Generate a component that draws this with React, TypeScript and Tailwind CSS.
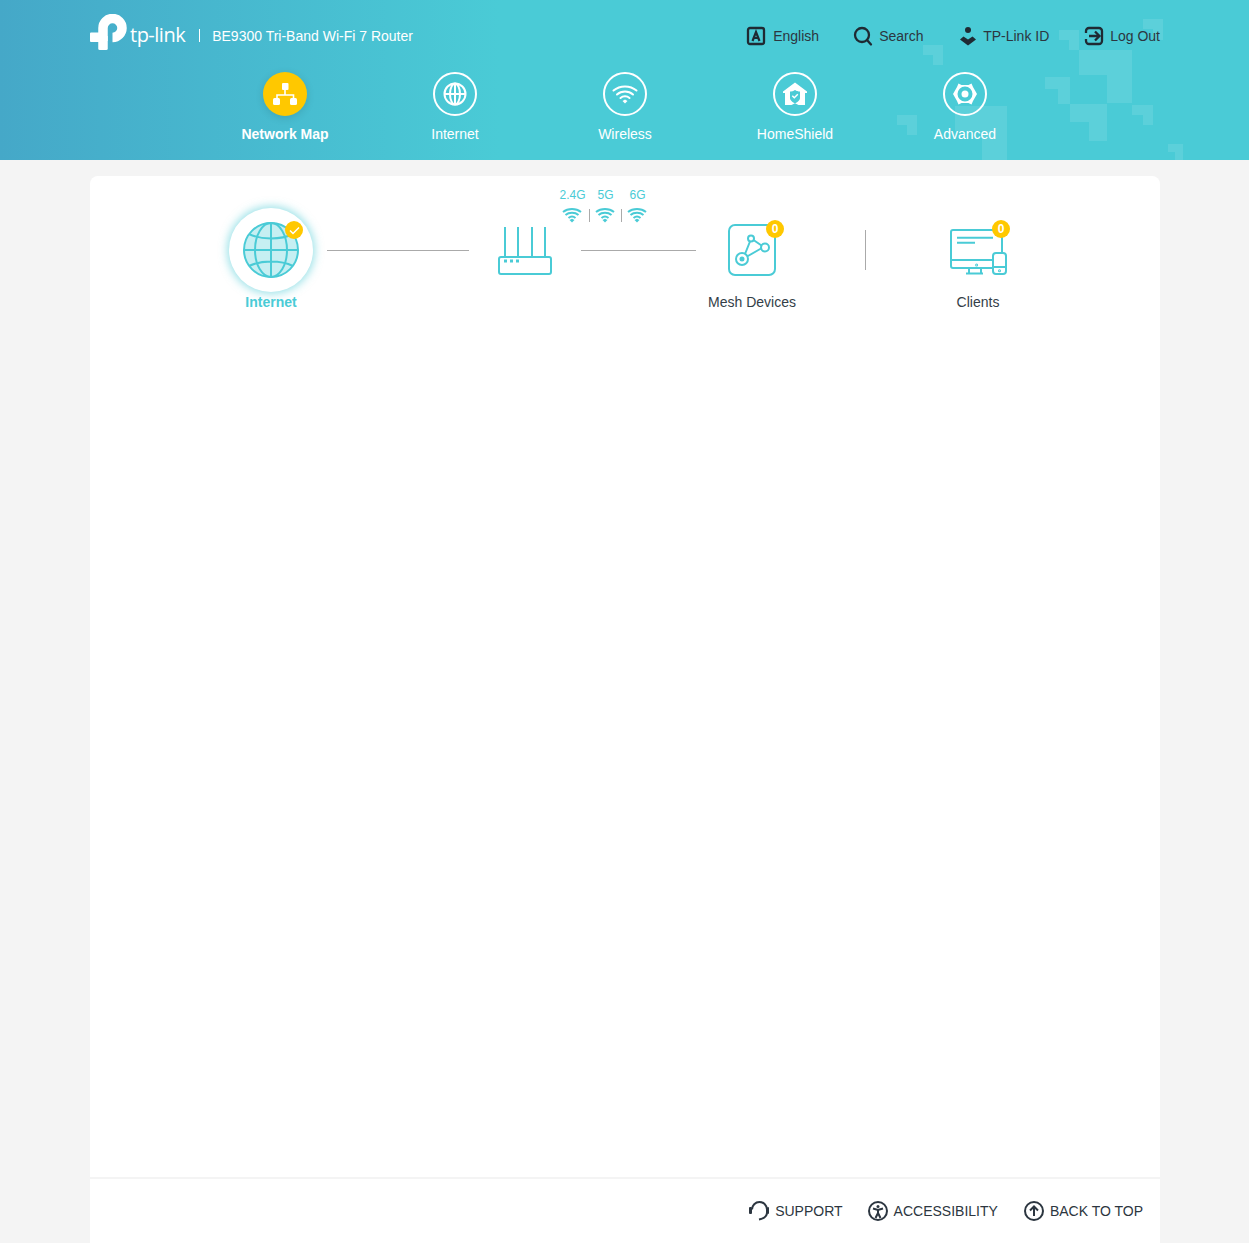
import React from "react";

const CORNERS: [number, number, number, number, number][] = [
  [923, 45, 20, 20, 10],
  [1143, 19, 20, 21, 10],
  [1059, 30, 20, 20, 10],
  [1079, 50, 53, 53, 25],
  [1045, 77, 25, 27, 12],
  [1070, 104, 37, 37, 18],
  [1132, 105, 21, 20, 10],
  [897, 115, 20, 20, 10],
  [955, 106, 52, 54, 25],
  [1168, 144, 15, 16, 8],
];

function Decoration() {
  return (
    <svg className="absolute left-0 top-0" width="1249" height="160" fill="#ffffff" fillOpacity="0.1">
      {CORNERS.map(([x, y, w, h, t], i) => (
        <path key={i} d={`M${x} ${y}h${w}v${h}h${-t}v${-(h - t)}h${-(w - t)}z`} />
      ))}
    </svg>
  );
}

function Logo() {
  return (
    <svg width="38" height="36" viewBox="0 0 38 36" fill="none">
      <path d="M13 27V14a9.500 9.500 0 1 1 9.500 9.500" stroke="#fff" strokeWidth="9.500" />
      <path d="M1 18.500h12v9.500H1a1 1 0 0 1-1-1v-7.500a1 1 0 0 1 1-1z" fill="#fff" />
      <path d="M8.250 22h9.500v12.500a1.500 1.500 0 0 1-1.500 1.500h-6.500a1.500 1.500 0 0 1-1.500-1.500z" fill="#fff" />
    </svg>
  );
}

function TopIcon({ name }: { name: string }) {
  const common = { width: 22, height: 22, viewBox: "0 0 22 22", fill: "none", stroke: "#1f2a33", strokeWidth: 2.3 } as const;
  if (name === "lang")
    return (
      <svg {...common}>
        <rect x="3" y="3" width="16" height="16" rx="2" />
        <path d="M7.500 16l3.500-9 3.500 9M8.800 13h4.400" strokeWidth="2.200" />
      </svg>
    );
  if (name === "search")
    return (
      <svg {...common}>
        <circle cx="11" cy="10" r="7" />
        <path d="M16 15l4 4.500" strokeLinecap="round" />
      </svg>
    );
  if (name === "id")
    return (
      <svg {...common} stroke="none" fill="#1f2a33">
        <circle cx="13" cy="5" r="3" />
        <path d="M5 14.500l3.500-3 4.500 3 4.500-3 3.500 3-8 6z" />
      </svg>
    );
  return (
    <svg {...common}>
      <path d="M4 8V6a3 3 0 0 1 3-3h10a3 3 0 0 1 3 3v10a3 3 0 0 1-3 3H7a3 3 0 0 1-3-3v-2" />
      <path d="M7 11h11M13 6.500l4.500 4.500-4.500 4.500" />
    </svg>
  );
}

function TopLink({ icon, label, w }: { icon: string; label: string; w: string }) {
  return (
    <div className={`flex items-center gap-[6px] ${w}`}>
      <TopIcon name={icon} />
      <span className="text-[14px] leading-5 text-[#2c3640]">{label}</span>
    </div>
  );
}

function NavIcon({ name }: { name: string }) {
  if (name === "map")
    return (
      <svg width="26" height="26" viewBox="0 0 26 26" fill="#fff">
        <rect x="10" y="2" width="6.500" height="7" rx="1" />
        <path d="M13 8v6M5 18v-4h16.500v4" fill="none" stroke="#fff" strokeWidth="1.600" />
        <rect x="1" y="17" width="7" height="7" rx="1.500" />
        <rect x="18" y="17" width="7" height="7" rx="1.500" />
      </svg>
    );
  if (name === "globe")
    return (
      <svg width="26" height="26" viewBox="0 0 26 26" fill="none" stroke="#fff" strokeWidth="2">
        <circle cx="13" cy="13" r="10.500" />
        <ellipse cx="13" cy="13" rx="5" ry="10.500" />
        <path d="M13 2.500v21M2.500 13h21" />
      </svg>
    );
  if (name === "wifi")
    return (
      <svg width="26" height="26" viewBox="0 0 26 26" fill="none" stroke="#fff" strokeWidth="2" strokeLinecap="round">
        <path d="M1.500 9.500c6.500-5.500 16.500-5.500 23 0M5 13.500c4.500-4 11.500-4 16 0M8.500 17c2.500-2.200 6.500-2.200 9 0" />
        <path d="M10.500 20l2.500-1.500 2.500 1.500-2.500 2.500z" fill="#fff" stroke="none" />
      </svg>
    );
  if (name === "home")
    return (
      <svg width="26" height="26" viewBox="0 0 26 26">
        <path
          fill="#fff"
          fillRule="evenodd"
          d="M13 1.500L25 10.500v1.500h-2v12h-6.500l-3.500-1.800-3.500 1.800H3V12H1v-1.500zM8 10.500v6.500c0 2.500 3 4.500 5 5.500 2-1 5-3 5-5.500v-6.500c-3.500 0-3.500-1-5-1.500-1.500.5-1.500 1.500-5 1.500z"
        />
        <path d="M10.300 14.700l2 2 3.500-3.500" fill="none" stroke="#fff" strokeWidth="1.500" />
      </svg>
    );
  return (
    <svg width="26" height="26" viewBox="0 0 26 26" fill="none">
      <path
        fill="#fff"
        fillRule="evenodd"
        d="M6.500 2.500l3 1.500h7l3-1.500 1.500 3.500 4 7-4 7-1.500 3.500-3-1.500h-7l-3 1.500L5 20l-4-7 4-7zM13 5.500a7.500 7.500 0 1 0 0 15 7.500 7.500 0 0 0 0-15z"
      />
      <circle cx="13" cy="13" r="3.500" fill="#fff" />
    </svg>
  );
}

function NavItem({ icon, label, active }: { icon: string; label: string; active?: boolean }) {
  return (
    <div className="flex w-[170px] flex-col items-center">
      <div
        className={
          active
            ? "flex h-11 w-11 items-center justify-center rounded-full bg-[#ffc800] shadow-[0_2px_8px_rgba(0,0,0,0.12)]"
            : "flex h-11 w-11 items-center justify-center rounded-full border-2 border-white"
        }
      >
        <NavIcon name={icon} />
      </div>
      <span className={`mt-2 text-[14px] leading-5 text-white ${active ? "font-bold" : ""}`}>{label}</span>
    </div>
  );
}

function Badge({ children }: { children: React.ReactNode }) {
  return (
    <span className="absolute flex h-[18px] w-[18px] items-center justify-center rounded-full bg-[#ffc800] text-[12px] font-bold leading-none text-white">
      {children}
    </span>
  );
}

function Wifi() {
  return (
    <svg width="20" height="16" viewBox="0 0 20 16" fill="none" stroke="#4acbd6" strokeWidth="2">
      <path d="M1 5c5-4 13-4 18 0M3.500 8c3.500-3 9.500-3 13 0M6.500 11c2-1.700 5-1.700 7 0" />
      <path d="M7.500 13l2.500-1.300 2.500 1.300-2.500 2.500z" fill="#4acbd6" stroke="none" />
    </svg>
  );
}

function FooterLink({ icon, label, className }: { icon: React.ReactNode; label: string; className?: string }) {
  return (
    <div className={`flex items-center gap-[6px] ${className ?? ""}`}>
      {icon}
      <span className="text-[14px] leading-5 text-[#2c3640]">{label}</span>
    </div>
  );
}

export default function App() {
  return (
    <div className="relative h-screen overflow-hidden bg-[#f4f4f4] font-['Liberation_Sans',Arial,sans-serif]">
      <header className="relative h-40 bg-gradient-to-r from-[#45a8c8] via-[#4acbd6] via-40% to-[#4acbd6]">
        <Decoration />
        <div className="relative flex h-[72px] items-start pl-[90px] pr-[89px] pt-[14px]">
          <Logo />
          <span className="ml-[2px] mt-[7px] font-['Open_Sans',sans-serif] text-[20px] font-normal leading-7 tracking-[-0.5px] text-white">
            tp-link
          </span>
          <span className="ml-[14px] mt-[15px] h-[13px] w-px bg-white" />
          <span className="ml-3 mt-[12px] text-[14px] leading-5 text-white">BE9300 Tri-Band Wi-Fi 7 Router</span>
          <div className="ml-auto mt-[11px] flex items-center">
            <TopLink icon="lang" label="English" w="w-[106px]" />
            <TopLink icon="search" label="Search" w="w-[104px]" />
            <TopLink icon="id" label="TP-Link ID" w="w-[127px]" />
            <TopLink icon="out" label="Log Out" w="" />
          </div>
        </div>
        <nav className="relative flex pl-[200px]">
          <NavItem icon="map" label="Network Map" active />
          <NavItem icon="globe" label="Internet" />
          <NavItem icon="wifi" label="Wireless" />
          <NavItem icon="home" label="HomeShield" />
          <NavItem icon="gear" label="Advanced" />
        </nav>
      </header>

      <main className="ml-[90px] mr-[89px] mt-4 rounded-t-lg bg-white">
        <section className="flex h-[1001px] items-start pl-[139px] pt-8">
          <div className="relative flex w-[84px] flex-col items-center">
            <div className="flex h-[84px] w-[84px] items-center justify-center rounded-full bg-white shadow-[0_0_8px_2px_rgba(74,203,214,0.55)]">
              <svg width="58" height="58" viewBox="0 0 58 58" fill="none" stroke="#4acbd6" strokeWidth="2">
                <circle cx="29" cy="29" r="27" fill="#c6eff2" />
                <ellipse cx="29" cy="29" rx="16" ry="27" />
                <path d="M29 2v54M2 29h54M7 13c12 6 32 6 44 0M7 45c12-6 32-6 44 0" />
              </svg>
            </div>
            <span className="absolute left-[56px] top-[13px]">
              <Badge>
                <svg width="11" height="9" viewBox="0 0 11 9" fill="none" stroke="#fff" strokeWidth="1.500">
                  <path d="M1 4.500l3 3 6-6" />
                </svg>
              </Badge>
            </span>
            <span className="whitespace-nowrap text-[14px] font-bold leading-5 text-[#4acbd6]">Internet</span>
          </div>

          <div className="ml-[14px] mt-[42px] h-px w-[142px] bg-[#aaaaaa]" />

          <div className="relative ml-[29px] mt-[18px] w-[54px]">
            <svg width="54" height="50" viewBox="0 0 54 50" fill="none" stroke="#4acbd6" strokeWidth="2">
              <path d="M7 1v29M20 1v29M34 1v29M47 1v29" />
              <rect x="1" y="31" width="52" height="17" rx="2" />
              <path d="M6 35h3M12 35h3M18 35h3" strokeWidth="3" />
            </svg>
            <div className="absolute left-[61px] top-[-39px] flex flex-col">
              <div className="flex text-center text-[12px] leading-4 text-[#4acbd6]">
                <span className="w-[27px]">2.4G</span>
                <span className="w-[39px]">5G</span>
                <span className="w-[25px]">6G</span>
              </div>
              <div className="ml-[3px] mt-1 flex items-center">
                <Wifi />
                <span className="ml-[7px] h-[13px] w-px bg-[#aaaaaa]" />
                <span className="ml-[5px]"><Wifi /></span>
                <span className="ml-[6px] h-[13px] w-px bg-[#aaaaaa]" />
                <span className="ml-[5px]"><Wifi /></span>
              </div>
            </div>
          </div>

          <div className="ml-[29px] mt-[42px] h-px w-[115px] bg-[#aaaaaa]" />

          <div className="relative ml-[6px] mt-[14px] flex w-[100px] flex-col items-center">
            <svg width="50" height="54" viewBox="0 0 50 54" fill="none" stroke="#4acbd6" strokeWidth="2">
              <rect x="2" y="3" width="46" height="50" rx="6" />
              <circle cx="15" cy="37" r="6" />
              <circle cx="15" cy="37" r="1.500" fill="#4acbd6" />
              <circle cx="24" cy="16.500" r="3" />
              <circle cx="38" cy="25.500" r="4" />
              <path d="M18 32l5-12.500M26.500 18l8 5.500M34 26.500l-14 8" />
            </svg>
            <span className="absolute left-[64px] top-[-2px]"><Badge>0</Badge></span>
            <span className="mt-[16px] whitespace-nowrap text-[14px] leading-5 text-[#333e48]">Mesh Devices</span>
          </div>

          <div className="ml-[63px] mt-[22px] h-10 w-px bg-[#aaaaaa]" />

          <div className="relative ml-[62px] mt-[14px] flex w-[100px] flex-col items-center">
            <svg width="58" height="54" viewBox="0 0 58 54" fill="none" stroke="#4acbd6" strokeWidth="2">
              <path d="M43 46H4a2 2 0 0 1-2-2V10a2 2 0 0 1 2-2h47a2 2 0 0 1 2 2v20" />
              <path d="M2 38h41M20 46v5M32 46v5M17 51.500h17M8 15.700h36M8 20.700h18" />
              <rect x="44" y="31" width="13" height="21" rx="3" />
              <path d="M44 45h13" />
              <circle cx="50.500" cy="48.700" r="0.500" />
              <circle cx="27.600" cy="43" r="0.500" />
            </svg>
            <span className="absolute left-[64px] top-[-2px]"><Badge>0</Badge></span>
            <span className="mt-[16px] whitespace-nowrap text-[14px] leading-5 text-[#333e48]">Clients</span>
          </div>
        </section>

        <footer className="flex h-[66px] items-center justify-end gap-[26px] border-t-2 border-[#f4f4f4] pr-[17px]">
          <FooterLink
            className="mr-[-1px]"
            label="SUPPORT"
            icon={
              <svg width="22" height="22" viewBox="0 0 22 22" fill="none" stroke="#2c3640" strokeWidth="2">
                <path d="M5 9.500a7.500 7.500 0 0 1 15 0v3c0 4-3 6-8 7" />
                <rect x="2" y="7" width="3" height="7" rx="1" fill="#2c3640" stroke="none" />
                <rect x="20" y="7" width="2" height="7" rx="1" fill="#2c3640" stroke="none" />
              </svg>
            }
          />
          <FooterLink
            label="ACCESSIBILITY"
            icon={
              <svg width="20" height="20" viewBox="0 0 20 20" fill="none" stroke="#2c3640" strokeWidth="2">
                <circle cx="10" cy="10" r="9" />
                <circle cx="10" cy="5.500" r="1.500" fill="#2c3640" stroke="none" />
                <path d="M5 7.500l5 1.500 5-1.500M10 9v3M10 12l-2.500 5M10 12l2.500 5" />
              </svg>
            }
          />
          <FooterLink
            label="BACK TO TOP"
            icon={
              <svg width="20" height="20" viewBox="0 0 20 20" fill="none" stroke="#2c3640" strokeWidth="2">
                <circle cx="10" cy="10" r="9" />
                <path d="M10 15V6M6 9.500L10 5.500l4 4" />
              </svg>
            }
          />
        </footer>
      </main>
    </div>
  );
}
